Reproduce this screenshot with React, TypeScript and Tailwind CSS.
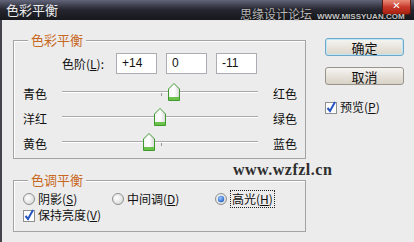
import React from 'react';

const cjk = { fontFamily: '"Noto Sans CJK SC", "Noto Sans", sans-serif' };

const Thumb: React.FC<{ left: number }> = ({ left }) => (
  <svg
    className="absolute top-[-8px]"
    style={{ left: left - 6 }}
    width="12"
    height="18"
    viewBox="0 0 12 18"
  >
    <defs>
      <linearGradient id="tb" x1="0" y1="0" x2="1" y2="0">
        <stop offset="0" stopColor="#f4f4f4" />
        <stop offset="0.5" stopColor="#ffffff" />
        <stop offset="1" stopColor="#d8d8d8" />
      </linearGradient>
    </defs>
    <path d="M0.5 6 L6 0.5 L11.5 6 V17.5 H0.5 Z" fill="url(#tb)" stroke="#3f9a2e" />
    <rect x="1" y="14" width="10" height="3" fill="#6cc34b" />
  </svg>
);

const SliderRow: React.FC<{ left: string; right: string; pos: number; tick?: boolean }> = ({
  left,
  right,
  pos,
  tick = true,
}) => (
  <div className="flex items-center h-[25px] pl-[9px]">
    <span className="w-[39px] text-[12px] leading-none">{left}</span>
    <div className="relative w-[196px] h-[2px] mt-[-3px]">
      <div className="h-[1px] bg-[#a9a9a9]" />
      <div className="h-[1px] bg-white" />
      {tick && <div className="absolute left-[99px] top-[2px] w-[1px] h-[3px] bg-[#9a9a9a]" />}
      <Thumb left={pos} />
    </div>
    <span className="ml-[15px] text-[12px] leading-none">{right}</span>
  </div>
);

const Radio: React.FC<{ checked?: boolean }> = ({ checked }) => (
  <svg width="12" height="12" viewBox="0 0 12 12" className="shrink-0">
    <defs>
      <radialGradient id="rg" cx="0.4" cy="0.4" r="0.7">
        <stop offset="0" stopColor="#ffffff" />
        <stop offset="1" stopColor="#d6d6d6" />
      </radialGradient>
      <radialGradient id="rb" cx="0.4" cy="0.35" r="0.7">
        <stop offset="0" stopColor="#9cc8ff" />
        <stop offset="1" stopColor="#1f5fc4" />
      </radialGradient>
    </defs>
    <circle cx="6" cy="6" r="5.5" fill="url(#rg)" stroke="#8e8f8f" />
    {checked && <circle cx="6" cy="6" r="3.2" fill="url(#rb)" />}
  </svg>
);

const Check: React.FC = () => (
  <svg width="12" height="13" viewBox="0 0 12 13" className="shrink-0">
    <rect x="0.5" y="1.5" width="11" height="11" fill="#fff" stroke="#8e8f8f" />
    <path d="M2.5 7 L5 10 L10 1" fill="none" stroke="#2455c2" strokeWidth="2" />
  </svg>
);

export default function App() {
  return (
    <div className="w-[414px] h-[242px] overflow-hidden relative bg-[#ececec]" style={cjk}>
      {/* title bar */}
      <div className="relative h-[20px] bg-gradient-to-b from-[#62657a] via-[#24252e] to-[#17171d]">
        <span className="absolute left-[6px] top-[1px] text-[13px] leading-[18px] text-[#ececec]">色彩平衡</span>
        <div className="absolute left-[382px] top-0 w-[29px] h-[15px] rounded-b-[3px] border border-t-0 border-[#5a1810] bg-gradient-to-b from-[#e88a78] via-[#c8382a] to-[#a8200e] flex items-start justify-center">
          <span className="text-white font-bold text-[10px] leading-[11px]" style={{ fontFamily: '"DejaVu Sans", sans-serif' }}>
            ✕
          </span>
        </div>
        <span
          className="absolute left-[240px] top-[7px] text-[12px] leading-[13px] text-[#b9b9b9] whitespace-nowrap"
          style={{ textShadow: '0 0 1px #000' }}
        >
          思缘设计论坛
        </span>
        <span
          className="absolute left-[317px] top-[13px] text-[8px] leading-[7px] text-[#c4c4c4] font-bold whitespace-nowrap"
          style={{ fontFamily: '"Liberation Sans", sans-serif', textShadow: '0 0 1px #000' }}
        >
          WWW.MISSYUAN.COM
        </span>
      </div>

      {/* body */}
      <div className="flex h-[222px] border-l-[2px] border-[#44454c] text-[#111]">
        <div className="ml-[11px] w-[293px]">
          {/* group 1 */}
          <div className="relative mt-[20px] h-[119px] border border-[#a3a3a3] shadow-[inset_1px_1px_0_#fff]">
            <span className="absolute left-[14px] top-[-9px] px-[3px] bg-[#ececec] text-[13px] leading-[16px] text-[#c8681e]">
              色彩平衡
            </span>
            <div className="flex items-center h-[21px] mt-[12px] pl-[48px]">
              <span className="w-[54px] text-[12px] leading-none">
                色阶(<span className="underline">L</span>):
              </span>
              {['+14', '0', '-11'].map((v, i) => (
                <div
                  key={v}
                  className={`w-[41px] h-[21px] border border-[#abadb3] bg-white pl-[5px] text-[12px] leading-[19px] ${i ? 'ml-[9px]' : ''}`}
                  style={{ fontFamily: '"Liberation Sans", sans-serif' }}
                >
                  {v}
                </div>
              ))}
            </div>
            <div className="mt-[7px]">
              <SliderRow left="青色" right="红色" pos={112} />
              <SliderRow left="洋红" right="绿色" pos={98} tick={false} />
              <SliderRow left="黄色" right="蓝色" pos={87} />
            </div>
          </div>

          {/* group 2 */}
          <div className="relative mt-[21px] h-[52px] border border-[#a3a3a3] shadow-[inset_1px_1px_0_#fff]">
            <span className="absolute left-[14px] top-[-9px] px-[3px] bg-[#ececec] text-[13px] leading-[16px] text-[#c8681e]">
              色调平衡
            </span>
            <div className="flex items-center h-[16px] mt-[10px] pl-[9px] text-[12px] leading-none">
              <div className="flex items-center w-[89px] gap-[3px]">
                <Radio />
                <span>
                  阴影(<span className="underline">S</span>)
                </span>
              </div>
              <div className="flex items-center w-[103px] gap-[3px]">
                <Radio />
                <span>
                  中间调(<span className="underline">D</span>)
                </span>
              </div>
              <div className="flex items-center gap-[3px]">
                <Radio checked />
                <span className="border border-dotted border-[#222] px-[1px] py-[2px]">
                  高光(<span className="underline">H</span>)
                </span>
              </div>
            </div>
            <div className="flex items-center h-[16px] pl-[9px] gap-[3px] text-[12px] leading-none">
              <Check />
              <span>
                保持亮度(<span className="underline">V</span>)
              </span>
            </div>
          </div>
        </div>

        {/* right column */}
        <div className="ml-[19px] w-[79px]">
          <div className="mt-[18px] h-[18px] rounded-[3px] border border-[#6fa8c8] bg-gradient-to-b from-[#f6f5f2] to-[#dcd6cb] shadow-[inset_0_0_0_1px_#bfe6f7] flex items-center justify-center text-[13px] leading-none">
            确定
          </div>
          <div className="mt-[11px] h-[18px] rounded-[3px] border border-[#9a958c] bg-gradient-to-b from-[#f6f5f2] to-[#d8d1c5] flex items-center justify-center text-[13px] leading-none">
            取消
          </div>
          <div className="mt-[15px] flex items-center gap-[3px] h-[14px] text-[12px] leading-none">
            <Check />
            <span>
              预览(<span className="underline">P</span>)
            </span>
          </div>
        </div>
      </div>

      {/* watermark */}
      <span
        className="absolute left-[233px] top-[162px] text-[16px] leading-[16px] font-bold tracking-[0.5px] text-[#2e2e2e] whitespace-nowrap"
        style={{ fontFamily: '"Liberation Serif", serif' }}
      >
        www.wzfzl.cn
      </span>
    </div>
  );
}
